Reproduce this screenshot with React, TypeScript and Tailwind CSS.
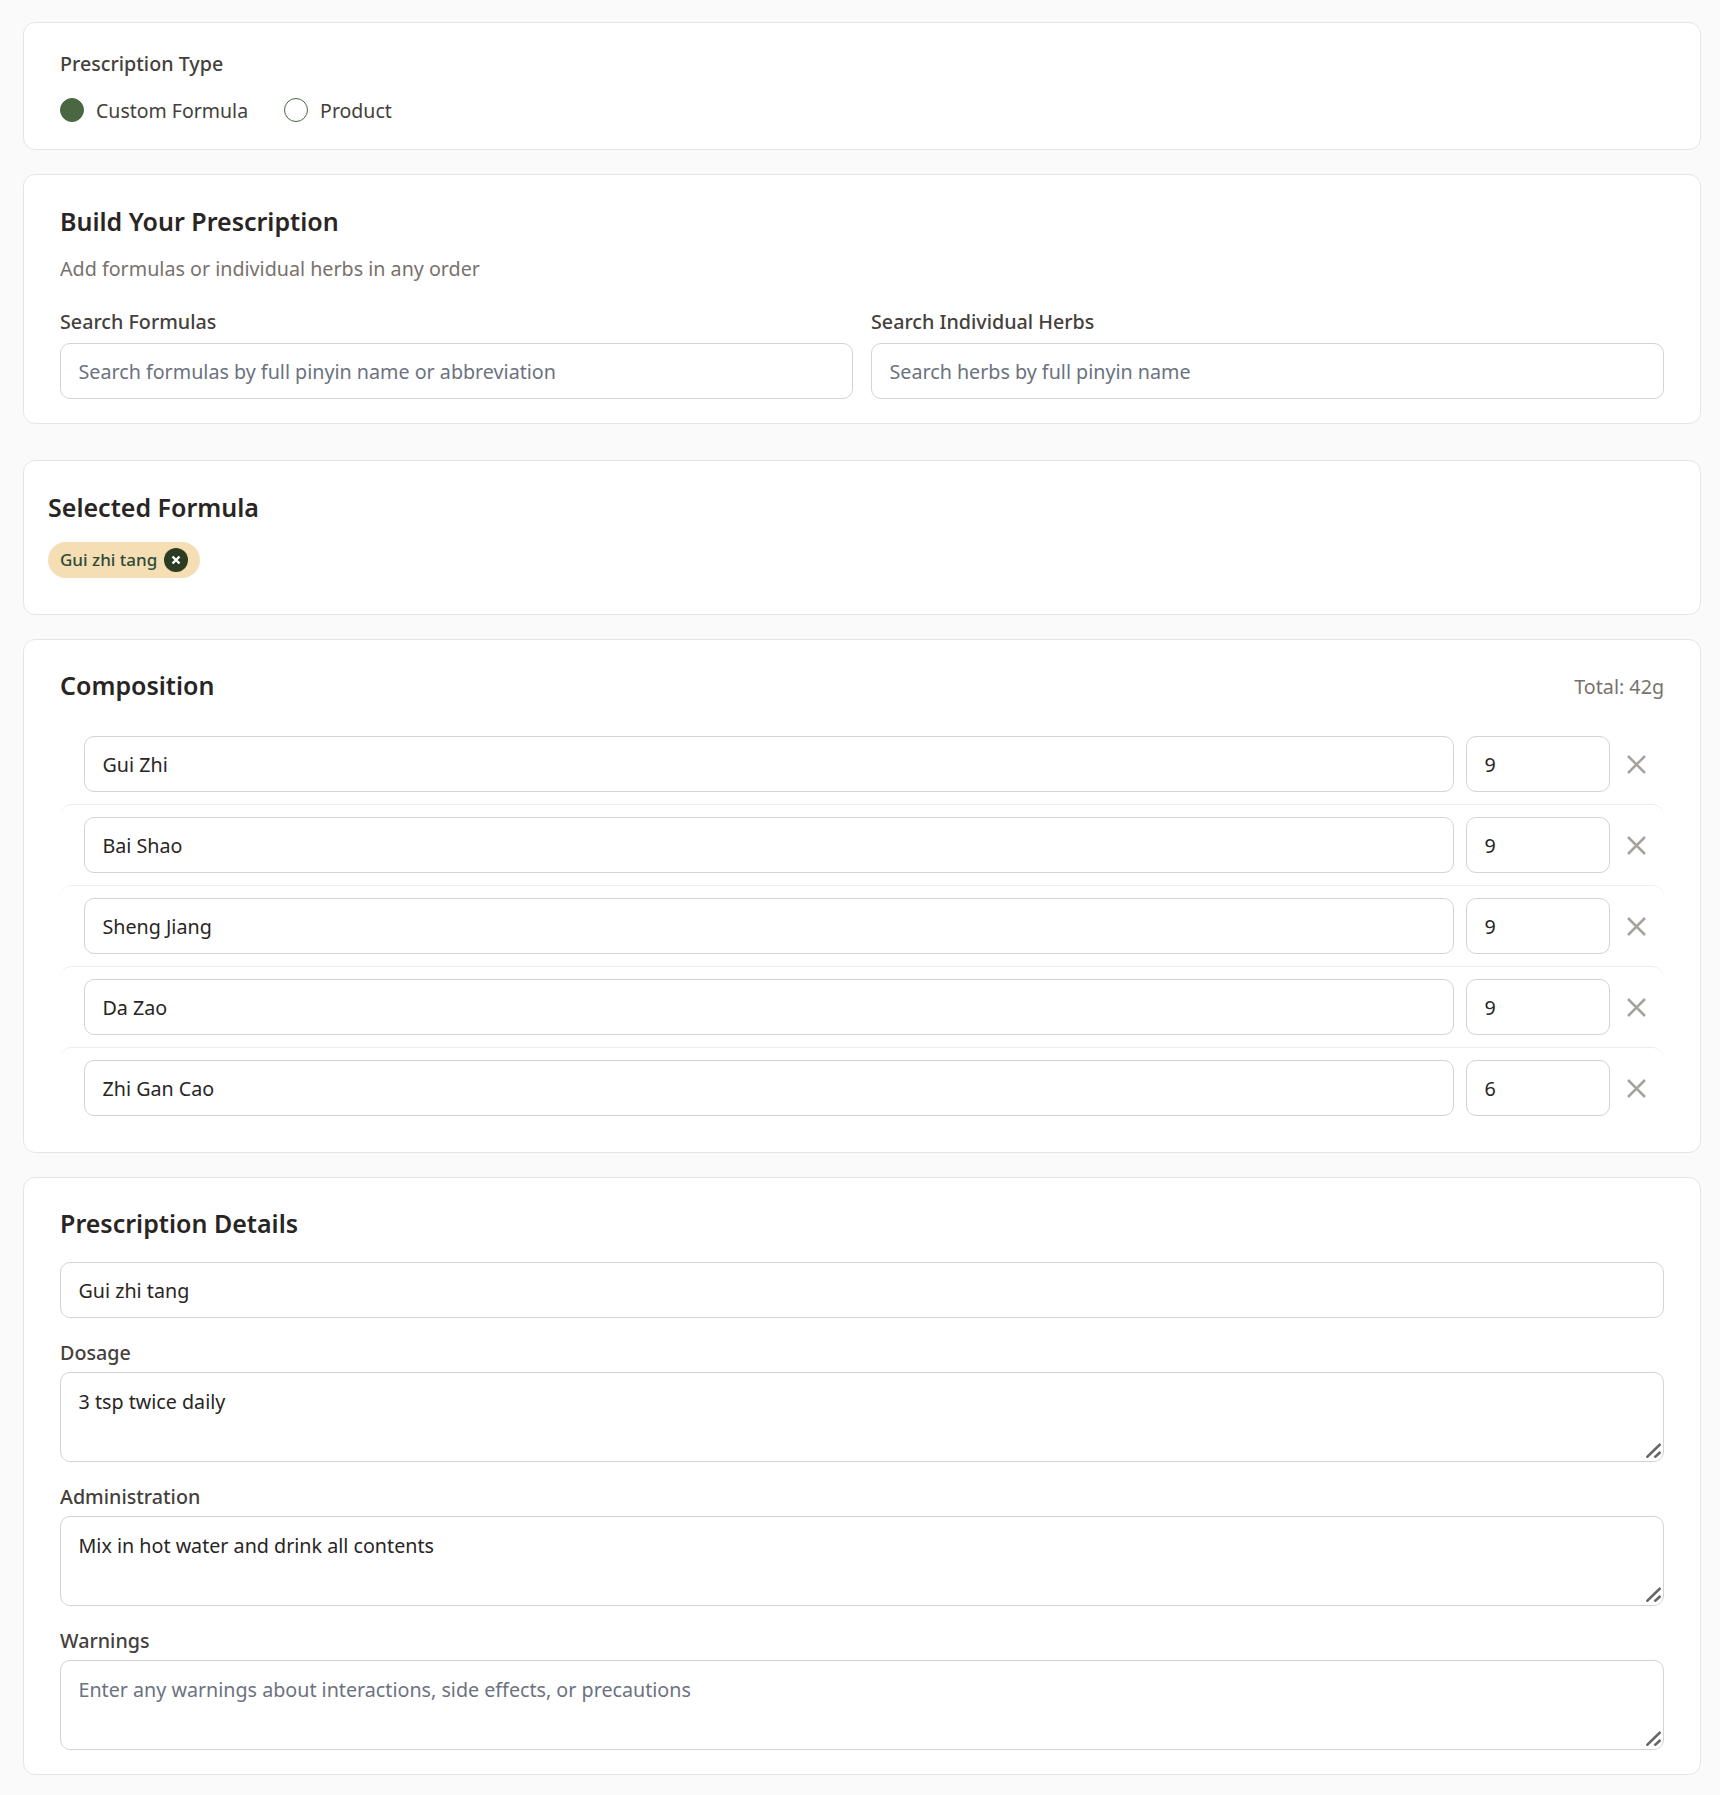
import { ReactNode } from "react";

const herbs = [
  { name: "Gui Zhi", grams: "9" },
  { name: "Bai Shao", grams: "9" },
  { name: "Sheng Jiang", grams: "9" },
  { name: "Da Zao", grams: "9" },
  { name: "Zhi Gan Cao", grams: "6" },
];

function Card({ className, children }: { className: string; children: ReactNode }) {
  return <section className={`rounded-xl border border-[#e7e5e4] bg-white ${className}`}>{children}</section>;
}

function Label({ children }: { children: ReactNode }) {
  return <label className="block text-[19.7px] leading-7 font-medium text-[#44403c]">{children}</label>;
}

function Heading({ children }: { children: ReactNode }) {
  return <h2 className="text-[25px] leading-9 font-semibold text-[#292524]">{children}</h2>;
}

function Area({ value, placeholder }: { value?: string; placeholder?: string }) {
  return (
    <div className="relative mt-[5px]">
      <textarea
        className="block h-[90px] w-full resize-none rounded-[10px] border border-[#d6d3d1] bg-white px-[17.5px] py-[15px] text-[19.7px] leading-7 text-[#292524] outline-none placeholder:text-[#6b7280]"
        defaultValue={value}
        placeholder={placeholder}
      />
      <svg
        className="pointer-events-none absolute right-[3px] bottom-[4px]"
        width="15"
        height="15"
        viewBox="0 0 15 15"
        fill="none"
        stroke="#666666"
        strokeWidth="2.6"
      >
        <path d="M0.5 14.5L14.5 1M8.5 14.5L14.5 9" />
      </svg>
    </div>
  );
}

const field =
  "block h-14 rounded-[10px] border border-[#d6d3d1] bg-white px-[17.5px] pt-px text-[19.7px] text-[#292524] placeholder:text-[#6b7280] outline-none";
const radio =
  "h-6 w-6 appearance-none rounded-full border border-[#4a6741] bg-white checked:bg-[#4a6741]";

export default function App() {
  return (
    <div className="min-h-[1795px] bg-[#fafafa] pt-[22px] pr-[19px] pb-5 pl-[23px] font-['Noto_Sans',sans-serif]">
      <Card className="px-9 pt-[27px] pb-[25px]">
        <Label>Prescription Type</Label>
        <div className="mt-[18px] flex h-7 items-center gap-9">
          <div className="flex items-center gap-3">
            <input type="radio" name="kind" defaultChecked className={radio} />
            <span className="mt-[2px] text-[19.5px] leading-7 text-[#44403c]">Custom Formula</span>
          </div>
          <div className="flex items-center gap-3">
            <input type="radio" name="kind" className={radio} />
            <span className="mt-[2px] text-[19.5px] leading-7 text-[#44403c]">Product</span>
          </div>
        </div>
      </Card>

      <Card className="mt-6 px-9 pt-7 pb-6">
        <Heading>Build Your Prescription</Heading>
        <p className="mt-4 text-[19.7px] leading-7 text-[#78716c]">Add formulas or individual herbs in any order</p>
        <div className="mt-[25px] grid grid-cols-2 gap-[18px]">
          <div>
            <Label>Search Formulas</Label>
            <input className={`mt-[7px] w-full ${field}`} placeholder="Search formulas by full pinyin name or abbreviation" />
          </div>
          <div>
            <Label>Search Individual Herbs</Label>
            <input className={`mt-[7px] w-full ${field}`} placeholder="Search herbs by full pinyin name" />
          </div>
        </div>
      </Card>

      <Card className="mt-9 px-6 pt-7 pb-9">
        <Heading>Selected Formula</Heading>
        <div className="mt-[17px] inline-flex h-9 items-center gap-[7px] rounded-full bg-[#f5deb3] px-3">
          <span className="text-[17px] leading-6 font-medium text-[#2d4a3a]">Gui zhi tang</span>
          <button className="flex h-6 w-6 items-center justify-center rounded-full bg-[#2d3b22]">
            <svg width="10" height="10" viewBox="0 0 10 10" fill="none" stroke="white" strokeWidth="2.4">
              <path d="M1.5 1.5l7 7M8.5 1.5l-7 7" />
            </svg>
          </button>
        </div>
      </Card>

      <Card className="mt-6 px-9 pt-[27px] pb-6">
        <div className="flex items-start justify-between">
          <Heading>Composition</Heading>
          <span className="mt-[6px] text-[19.7px] leading-7 text-[#78716c]">Total: 42g</span>
        </div>
        <div className="mt-[21px]">
          {herbs.map((herb, i) => (
            <div
              key={herb.name}
              className={`flex items-center rounded-t-xl py-3 pl-6 ${i > 0 ? "border-t border-[#efedeb]" : ""}`}
            >
              <input className={`min-w-0 flex-1 ${field}`} defaultValue={herb.name} />
              <input className={`ml-3 w-[144px] ${field}`} defaultValue={herb.grams} />
              <button className="flex h-14 w-[54px] items-center justify-center pr-px text-[#a8a29e]">
                <svg width="19" height="19" viewBox="0 0 19 19" fill="none" stroke="currentColor" strokeWidth="2.5">
                  <path d="M1 1l17 17M18 1L1 18" />
                </svg>
              </button>
            </div>
          ))}
        </div>
      </Card>

      <Card className="mt-6 px-9 pt-[27px] pb-6">
        <Heading>Prescription Details</Heading>
        <input className={`mt-[21px] w-full ${field}`} defaultValue="Gui zhi tang" />
        <div className="mt-[21px]">
          <Label>Dosage</Label>
          <Area value="3 tsp twice daily" />
        </div>
        <div className="mt-[21px]">
          <Label>Administration</Label>
          <Area value="Mix in hot water and drink all contents" />
        </div>
        <div className="mt-[21px]">
          <Label>Warnings</Label>
          <Area placeholder="Enter any warnings about interactions, side effects, or precautions" />
        </div>
      </Card>
    </div>
  );
}
